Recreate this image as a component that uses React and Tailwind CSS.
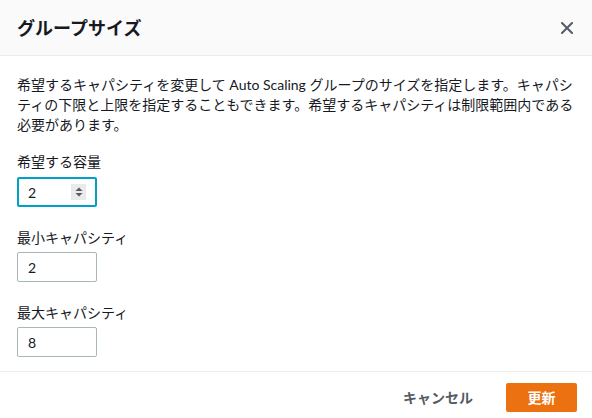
import React, { useState } from "react";

const font = { fontFamily: 'Lato, "Noto Sans CJK JP", sans-serif' };

// ::: Number spinner for the focused field ::: //
const Spinner = () => (
  <div className="w-[15px] h-[16px] bg-[#eaeaea] flex items-center justify-center">
    <svg width="8" height="10" viewBox="0 0 8 10">
      <path d="M4 0.5 L7.5 4 L0.5 4 Z" fill="#545b64" />
      <path d="M4 9.5 L7.5 6 L0.5 6 Z" fill="#545b64" />
    </svg>
  </div>
);

const Field = ({ label, value, focused, first }) => (
  <div className={first ? "mt-[17px]" : "mt-[21px]"}>
    <p className="text-[14px] leading-[20px] text-[#16191f]">{label}</p>
    {focused ? (
      <div className="mt-[5px] w-[80px] h-[30px] border-2 border-[#00a1c9] rounded-[2px] flex items-center pl-[9px] pr-[9px] justify-between">
        <span className="text-[14px] text-[#16191f]">{value}</span>
        <Spinner />
      </div>
    ) : (
      <div className="mt-[4px] w-[80px] h-[30px] border border-[#aab7b8] rounded-[2px] flex items-center pl-[10px]">
        <span className="text-[14px] text-[#16191f]">{value}</span>
      </div>
    )}
  </div>
);

const App = () => {
  const [sizes] = useState({ desired: 2, min: 2, max: 8 });

  return (
    <div className="w-[592px] h-[418px] bg-white overflow-hidden" style={font}>
      {/* header */}
      <div className="h-[56px] bg-[#fafafa] border-b border-[#eaeded] flex items-center justify-between pl-[17px] pr-[19px]">
        <h2 className="text-[18px] font-bold text-[#16191f] leading-[24px]">グループサイズ</h2>
        <svg width="12" height="12" viewBox="0 0 12 12">
          <path d="M1 1 L11 11 M11 1 L1 11" stroke="#545b64" strokeWidth="2" strokeLinecap="round" />
        </svg>
      </div>

      {/* body */}
      <div className="pt-[19px] pl-[17px] pr-[14px] pb-[14px]">
        <p className="text-[14px] leading-[20px] text-[#16191f]">
          希望するキャパシティを変更して Auto Scaling グループのサイズを指定します。キャパシティの下限と上限を指定することもできます。希望するキャパシティは制限範囲内である必要があります。
        </p>
        <Field label="希望する容量" value={sizes.desired} focused first />
        <Field label="最小キャパシティ" value={sizes.min} />
        <Field label="最大キャパシティ" value={sizes.max} />
      </div>

      {/* footer */}
      <div className="border-t border-[#eaeded] pt-[11px] pr-[15px] flex justify-end items-center gap-[33px]">
        <span className="text-[14px] font-bold text-[#545b64]">キャンセル</span>
        <button className="w-[71px] h-[29px] bg-[#ec7211] rounded-[2px] text-white text-[14px] font-bold">
          更新
        </button>
      </div>
    </div>
  );
};

export default App;
